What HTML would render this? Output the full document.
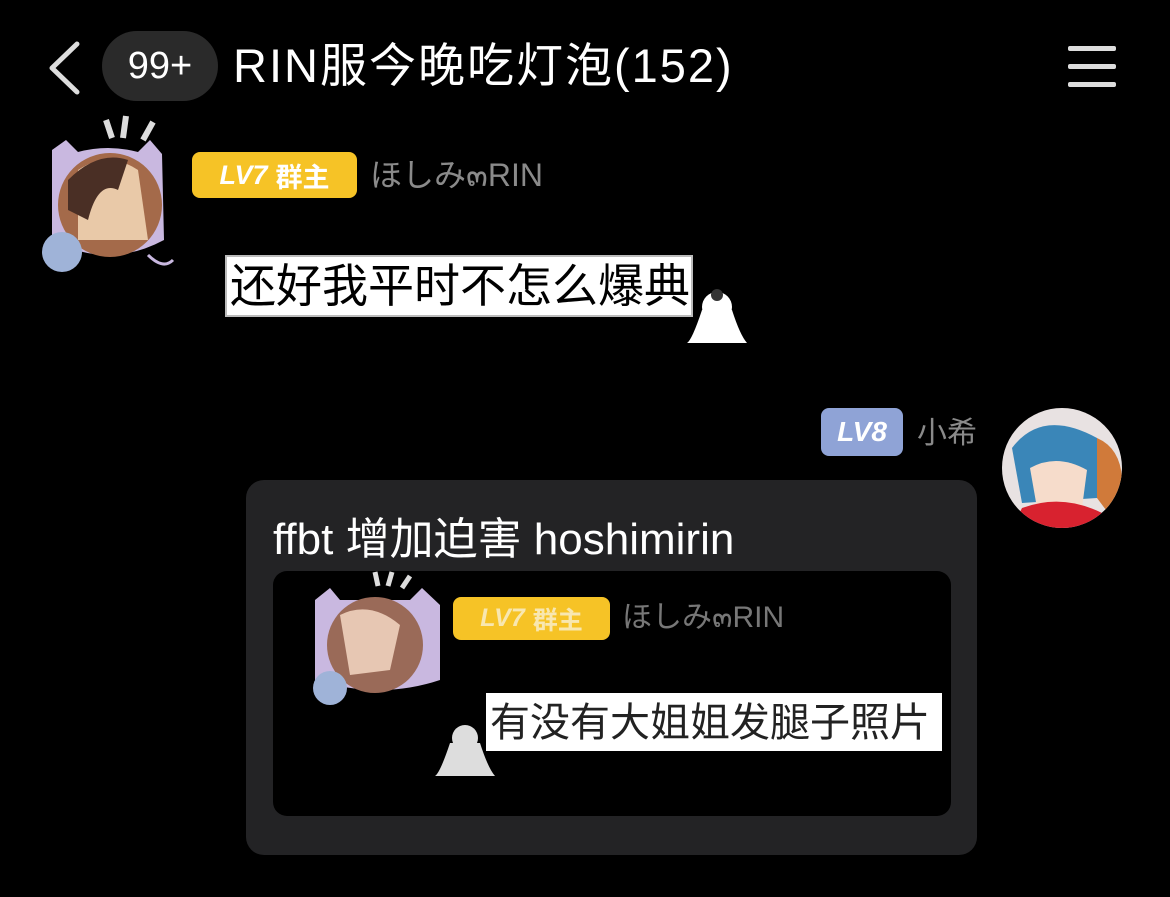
<!DOCTYPE html>
<html><head><meta charset="utf-8"><style>
*{margin:0;padding:0;box-sizing:border-box}
body{width:1170px;height:897px;background:#000;position:relative;overflow:hidden;font-family:"Liberation Sans","Noto Sans CJK SC",sans-serif;color:#fff}
.a{position:absolute;white-space:nowrap}
.badge{border-radius:8px;font-weight:bold;display:flex;align-items:center;justify-content:center;color:#fff}
</style></head><body>
<!-- header -->
<svg class="a" style="left:44px;top:40px" width="40" height="56" viewBox="0 0 40 56"><path d="M33 4 L8 28 L33 52" stroke="#ddd" stroke-width="5" fill="none" stroke-linecap="round" stroke-linejoin="round"/></svg>
<div class="a" style="left:102px;top:31px;width:116px;height:70px;border-radius:35px;background:#2a2a2a;font-size:38px;line-height:70px;text-align:center;color:#fff">99+</div>
<div class="a" style="left:233px;top:36px;font-size:47px;letter-spacing:2px;line-height:60px;color:#fff">RIN服今晚吃灯泡(152)</div>
<div class="a" style="left:1068px;top:46px;width:48px;height:5px;background:#ddd;border-radius:2px"></div>
<div class="a" style="left:1068px;top:64px;width:48px;height:5px;background:#ddd;border-radius:2px"></div>
<div class="a" style="left:1068px;top:82px;width:48px;height:5px;background:#ddd;border-radius:2px"></div>

<!-- first avatar -->
<svg class="a" style="left:38px;top:110px" width="140" height="170" viewBox="0 0 140 170">
<path d="M68 10 l6 18 M88 6 l-3 22 M115 12 l-10 18" stroke="#ddd" stroke-width="6"/>
<path d="M14 40 L28 30 L40 42 Q70 34 100 42 L112 30 L124 44 L126 130 Q70 160 14 130 Z" fill="#c9b8e0"/>
<circle cx="72" cy="95" r="52" fill="#a46a4a"/>
<path d="M40 60 Q70 40 100 60 L110 130 L40 130Z" fill="#e9c9a8"/>
<path d="M30 70 Q60 40 90 50 L80 80 Q60 70 50 110 L30 100Z" fill="#4a2f25"/>
<circle cx="24" cy="142" r="20" fill="#9fb3d8"/>
<path d="M110 145 Q125 160 135 150" stroke="#c9b8e0" stroke-width="3" fill="none"/>
</svg>
<div class="a badge" style="left:192px;top:152px;width:165px;height:46px;background:#f6c326;font-size:27px"><i style="font-style:italic;margin-right:8px">LV7</i>群主</div>
<div class="a" style="left:370px;top:155px;font-size:32px;color:#8a8a8a;line-height:40px">ほしみ๓RIN</div>
<!-- sticker bubble -->
<div class="a" style="left:225px;top:255px;width:468px;height:62px;background:#fff;border:2px solid #bbb"></div>
<div class="a" style="left:230px;top:258px;font-size:46px;line-height:56px;color:#000">还好我平时不怎么爆典</div>
<svg class="a" style="left:682px;top:285px" width="70" height="65" viewBox="0 0 70 65"><circle cx="35" cy="22" r="15" fill="#fff"/><path d="M20 25 Q10 55 5 58 L65 58 Q58 50 50 25Z" fill="#fff"/><circle cx="35" cy="10" r="6" fill="#333"/></svg>

<!-- second user -->
<div class="a badge" style="left:821px;top:408px;width:82px;height:48px;background:#8fa3d6;font-size:28px"><i>LV8</i></div>
<div class="a" style="left:917px;top:414px;font-size:30px;color:#8a8a8a;line-height:40px">小希</div>
<svg class="a" style="left:1002px;top:408px" width="120" height="120" viewBox="0 0 120 120">
<defs><clipPath id="c"><circle cx="60" cy="60" r="60"/></clipPath></defs>
<g clip-path="url(#c)"><rect width="120" height="120" fill="#e8e2e2"/>
<path d="M10 40 Q40 0 95 30 L95 90 L20 95Z" fill="#3a86b8"/>
<path d="M28 60 Q55 45 85 62 L80 100 L35 100Z" fill="#f6dccb"/>
<path d="M20 100 Q60 85 100 105 L110 120 L10 120Z" fill="#d8222f"/>
<path d="M95 30 Q118 40 120 70 L110 110 L95 90Z" fill="#d07a3a"/></g></svg>

<!-- big bubble -->
<div class="a" style="left:246px;top:480px;width:731px;height:375px;border-radius:18px;background:#232325"></div>
<div class="a" style="left:273px;top:512px;font-size:44px;line-height:56px;color:#fff">ffbt 增加迫害 hoshimirin</div>
<div class="a" style="left:273px;top:571px;width:678px;height:245px;border-radius:14px;background:#000"></div>
<svg class="a" style="left:300px;top:570px" width="150" height="140" viewBox="0 0 150 140">
<path d="M75 2 l3 14 M92 2 l-4 14 M110 6 l-8 12" stroke="#ddd" stroke-width="5"/>
<path d="M15 30 L30 18 L40 30 L110 30 L122 18 L140 35 L140 110 Q80 130 15 110Z" fill="#c9b8e0"/>
<circle cx="75" cy="75" r="48" fill="#9a6a58"/>
<path d="M40 45 Q70 30 100 55 L90 100 L50 105Z" fill="#e7c7b3"/>
<circle cx="30" cy="118" r="17" fill="#9fb3d8"/></svg>
<div class="a badge" style="left:453px;top:597px;width:157px;height:43px;background:#f6c326;font-size:25px;color:#f8e7b0"><i style="margin-right:8px">LV7</i>群主</div>
<div class="a" style="left:622px;top:599px;font-size:30px;color:#777;line-height:38px">ほしみ๓RIN</div>
<div class="a" style="left:486px;top:693px;width:456px;height:58px;background:#fff"></div>
<div class="a" style="left:490px;top:697px;font-size:40px;line-height:52px;color:#222">有没有大姐姐发腿子照片</div>
<svg class="a" style="left:430px;top:718px" width="70" height="65" viewBox="0 0 70 65"><circle cx="35" cy="20" r="13" fill="#ddd"/><path d="M20 25 Q10 55 5 58 L65 58 Q58 50 50 25Z" fill="#ddd"/></svg>
</body></html>
